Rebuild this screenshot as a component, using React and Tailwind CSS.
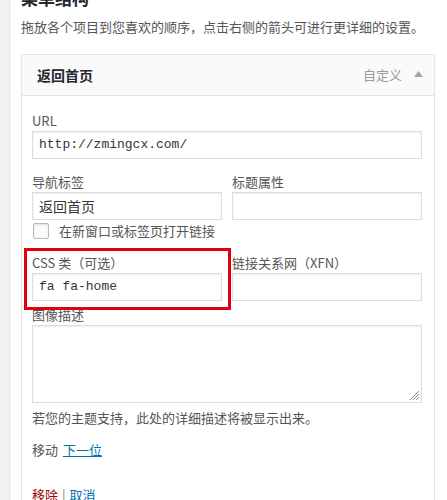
import { useState } from 'react'

const cjk = 'font-["Noto_Sans_CJK_SC","Noto_Sans",sans-serif]'
const mono = 'font-["Liberation_Mono","DejaVu_Sans_Mono",monospace]'

function Field({ value, className = '', font = mono, size = 'text-[13px]' }) {
  return (
    <div
      className={`h-[28px] border border-[#dddddd] bg-white shadow-[inset_0_1px_2px_rgba(0,0,0,0.07)] px-[6px] flex items-center text-[#32373c] ${size} ${font} ${className}`}
    >
      {value}
    </div>
  )
}

function Label({ children }) {
  return <div className="h-[20px] leading-[20px] text-[13px] text-[#555555]">{children}</div>
}

export default function App() {
  const [newTab, setNewTab] = useState(false)

  return (
    <div className={`flex h-[500px] overflow-hidden bg-white ${cjk}`}>
      {/* admin edge */}
      <div className="w-[11px] shrink-0 bg-[#f1f1f1]" />

      <div className="pl-[10px]">
        <h2 className="mt-[-12px] h-[20px] leading-[20px] text-[17px] font-semibold text-[#23282d]">菜单结构</h2>
        <p className="mt-[9px] h-[20px] leading-[20px] text-[13px] text-[#555555]">
          拖放各个项目到您喜欢的顺序，点击右侧的箭头可进行更详细的设置。
        </p>

        {/* menu item */}
        <div className="mt-[17px] w-[414px] border border-[#e5e5e5] shadow-[0_1px_1px_rgba(0,0,0,0.04)]">
          <div className="h-[41px] bg-[#fafafa] border-b border-[#e5e5e5] flex items-center justify-between pl-[15px] pr-[11px]">
            <span className="text-[14px] font-bold text-[#23282d]">返回首页</span>
            <div className="flex items-center gap-[12px]">
              <span className="text-[13px] text-[#999999]">自定义</span>
              <svg width="9" height="6" viewBox="0 0 9 6" className="mb-[2px]">
                <path d="M4.5 0 L9 6 L0 6 Z" fill="#a0a5aa" />
              </svg>
            </div>
          </div>

          <div className="bg-white pl-[10px] pt-[15px] h-[420px]">
            <div className="w-[390px]">
              <Label>URL</Label>
              <Field value="http://zmingcx.com/" />

              <div className="mt-[13px] grid grid-cols-[190px_190px] gap-x-[10px]">
                <div>
                  <Label>导航标签</Label>
                  <Field value="返回首页" font={cjk} size="text-[14px]" />
                </div>
                <div>
                  <Label>标题属性</Label>
                  <Field value="" />
                </div>
              </div>

              <label className="mt-[1px] h-[20px] flex items-center gap-[10px] text-[13px] text-[#555555] cursor-pointer">
                <input
                  type="checkbox"
                  checked={newTab}
                  onChange={(e) => setNewTab(e.target.checked)}
                  className="ml-[1px] w-[16px] h-[16px] appearance-none border border-[#b4b9be] rounded-[2px] bg-[#fbfbfb] shadow-[inset_0_1px_2px_rgba(0,0,0,0.1)]"
                />
                在新窗口或标签页打开链接
              </label>

              <div className="relative mt-[12px] grid grid-cols-[190px_190px] gap-x-[10px]">
                <div>
                  <Label>CSS 类（可选）</Label>
                  <Field value="fa fa-home" />
                </div>
                <div>
                  <Label>链接关系网（XFN）</Label>
                  <Field value="" />
                </div>
                {/* highlight annotation */}
                <div className="absolute left-[-8px] top-[-5px] w-[207px] h-[62px] border-[3px] border-[#e2000f] pointer-events-none" />
              </div>

              <div className="mt-[4px]">
                <Label>图像描述</Label>
                <div className="relative h-[78px] border border-[#dddddd] bg-white shadow-[inset_0_1px_2px_rgba(0,0,0,0.07)]">
                  <svg width="11" height="11" viewBox="0 0 11 11" className="absolute right-[1px] bottom-[1px]">
                    <path d="M10 1 L1 10 M10 4 L4 10 M10 7 L7 10" stroke="#888888" strokeWidth="1" />
                  </svg>
                </div>
              </div>

              <p className="mt-[5px] h-[20px] leading-[20px] text-[13px] text-[#555555]">
                若您的主题支持，此处的详细描述将被显示出来。
              </p>

              <p className="mt-[12px] h-[20px] leading-[20px] text-[13px] text-[#555555]">
                移动 <a href="#" className="ml-[2px] text-[#0073aa] underline">下一位</a>
              </p>

              <p className="mt-[25px] h-[20px] leading-[20px] text-[13px]">
                <a href="#" className="text-[#a00000]">移除</a>
                <span className="mx-[4px] text-[#82878c]">|</span>
                <a href="#" className="text-[#0073aa]">取消</a>
              </p>
            </div>
          </div>
        </div>
      </div>
    </div>
  )
}
